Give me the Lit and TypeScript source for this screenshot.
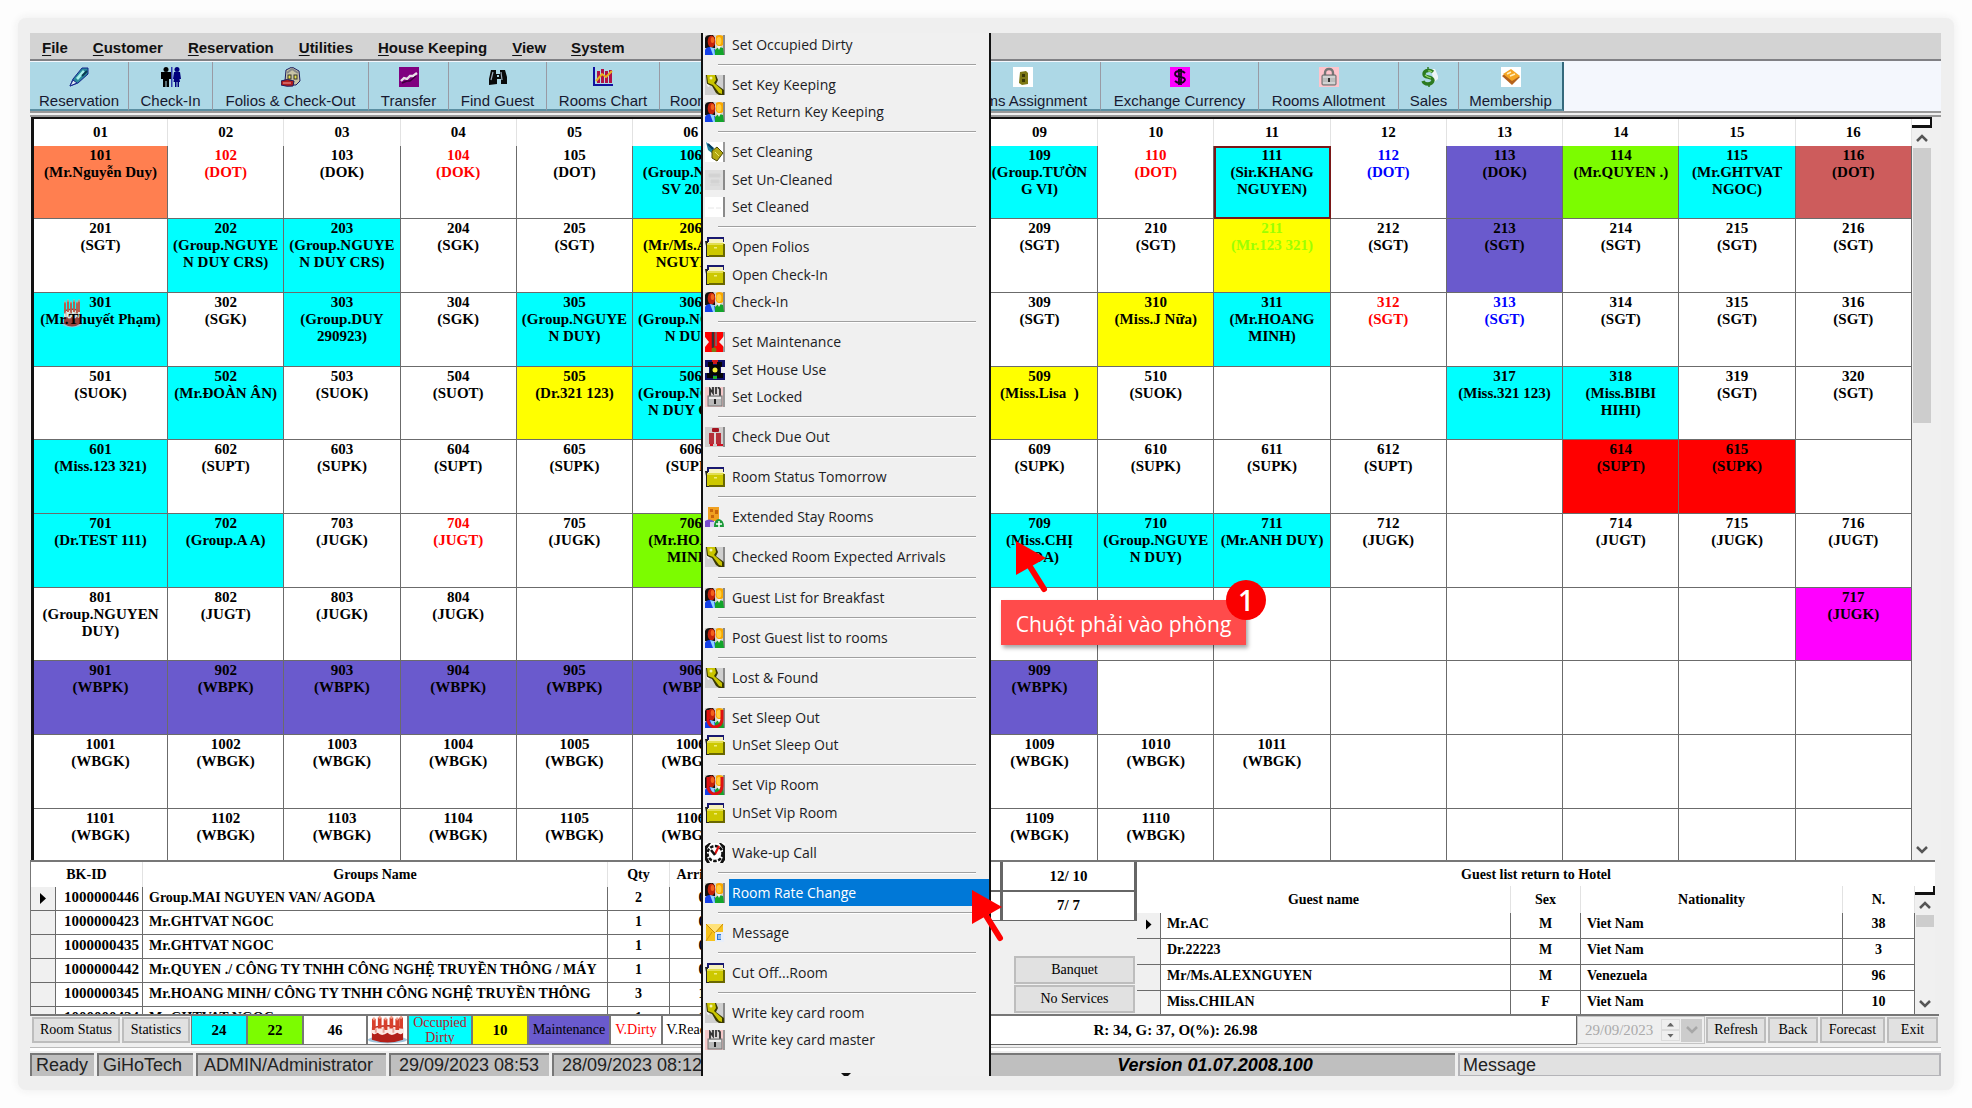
import { LitElement, html, css, svg, nothing } from "lit";
import { customElement, property } from "lit/decorators.js";
import { classMap } from "lit/directives/class-map.js";

/* ---------- icons ---------- */

const box = (body: unknown, cls = "ico") =>
  html`<svg class=${cls} viewBox="0 0 20 20" preserveAspectRatio="none" aria-hidden="true">${body}</svg>`;

const peopleBody = svg`
  <rect width="20" height="20" fill="#d8d4cc"/>
  <rect x="18" width="2" height="20" fill="#8a8a8a"/>
  <path d="M0 3Q1 0 5 0H8L10 3V13H0Z" fill="#141010"/>
  <ellipse cx="6.500" cy="6.500" rx="3.800" ry="6" fill="#c4220a"/>
  <ellipse cx="7.500" cy="5" rx="1.800" ry="3" fill="#f2641c"/>
  <path d="M0 20V15Q1 12 5 12L10 14V20Z" fill="#1440e8"/>
  <path d="M5 12L8 20H10L9 13Z" fill="#8fd4ff"/>
  <path d="M11 1Q14 -1 18 1V10Q14 13 11 9Z" fill="#f9a800"/>
  <ellipse cx="14" cy="6" rx="2.400" ry="4" fill="#ffcf3c"/>
  <path d="M10 20V15Q13 11 18 13L19 20Z" fill="#12a52a"/>
  <path d="M12 11H16L14 15Z" fill="#f4f4f4"/>`;

const keyBody = svg`
  <rect width="20" height="20" fill="#cfcfcf"/>
  <rect x="18" width="2" height="20" fill="#8a8a8a"/>
  <path d="M1 0H11L13 5L11 9L19 15V20H14L11 18L7 11L2 9Z" fill="#3b3a00"/>
  <path d="M2 0H10L11 5L9 8L17 15V19L14 18L8 10L3 8Z" fill="#c9c400"/>
  <circle cx="6" cy="3" r="1.500" fill="#f4f4b0"/>
  <path d="M1 8L5 11L3 12Z" fill="#f6f6f6"/>`;

const folderBody = svg`
  <path d="M2 0H19V5H2Z" fill="#191970"/>
  <path d="M4 2H18V6H4Z" fill="#f7f2c0"/>
  <path d="M0 4H3V19H20V20H1L1 9Z" fill="#222"/>
  <path d="M2 6H19V19H2Z" fill="#cdc800"/>
  <path d="M2 6H19V8H2Z" fill="#e2de50"/>
  <path d="M18 7H20V20H4V18H18Z" fill="#6a6800"/>
  <rect x="9" y="10" width="3" height="1.500" fill="#f0ed7a"/>`;

const lockBody = svg`
  <rect width="20" height="20" fill="#f5c9c9"/>
  <rect x="18" width="2" height="20" fill="#9a9a9a"/>
  <path d="M4 0H15V9H4Z" fill="#d9d5d5"/>
  <path d="M5 9V2L8 6V0M11 0V7M15 9V2L13 0" fill="none" stroke="#333" stroke-width="1.800"/>
  <rect x="3" y="9" width="14" height="10" fill="#b9b9b9" stroke="#777"/>
  <rect x="4" y="10" width="12" height="2" fill="#ececec"/>
  <path d="M9 12H11V17H9Z" fill="#222"/>`;

const vipBody = svg`${peopleBody}
  <path d="M3 2V13Q5 19 10 19Q17 18 17 11V2" fill="none" stroke="#e01010" stroke-width="3"/>`;

const cakeBody = svg`
  <ellipse cx="10" cy="17" rx="10" ry="2.600" fill="#9fc4dc"/>
  <path d="M2 8Q10 5 18 8V17Q10 21 2 17Z" fill="#b3201a"/>
  <path d="M2 9Q10 6 18 9V12Q17 14 15 12Q12 15 10 12Q7 15 5 12Q3 14 2 12Z" fill="#fbe9e4"/>
  <path d="M3 2V10M6 1V9M9 2V10M12 1V9M15 2V10M17 1V9" stroke="#d8402c" stroke-width="1.900"/>
  <path d="M3 1V3M6 0V2M9 1V3M12 0V2M15 1V3M17 0V2" stroke="#f3a08a"/>
  <path d="M4 9V12M8 9V12M13 9V12" stroke="#e8a49a"/>`;

const ICONS: Record<string, unknown> = {
  people: peopleBody,
  key: keyBody,
  folder: folderBody,
  lock: lockBody,
  vip: vipBody,
  cake: cakeBody,
  broom: svg`<rect width="20" height="20" fill="#fff"/><rect x="18" width="2" height="20" fill="#999"/>
    <path d="M1 0L9 6L7 11L3 8Z" fill="#1d7f9c"/><path d="M3 2L8 7" stroke="#073a5c" stroke-width="2"/>
    <path d="M7 9L12 5L18 11L12 19L7 16Z" fill="#b3a911" stroke="#4c4a08"/><path d="M10 10L14 14" stroke="#ece66b"/>`,
  uncleaned: svg`<rect width="20" height="20" fill="#dedede"/><rect x="18" width="2" height="20" fill="#8a8a8a"/>
    <path d="M4 4H15V7H4ZM6 10H14V13H6ZM5 15H15" fill="#d2d2d2" stroke="#d4d4d4"/>`,
  cleaned: svg`<rect width="20" height="20" fill="#fff"/><rect x="18" width="2" height="20" fill="#8a8a8a"/>
    <path d="M3 11H9M11 11H16" stroke="#e6e6e6"/>`,
  tools: svg`<rect width="20" height="20" fill="#f00"/><rect x="18" width="2" height="20" fill="#999"/>
    <path d="M0 5L4 10L0 15ZM19 4L14 10L19 15Z" fill="#efefef"/><path d="M8 0V16" stroke="#333" stroke-width="2.500"/>
    <path d="M11 0V14" stroke="#8a5a5a" stroke-width="2"/><circle cx="9" cy="18" r="2.500" fill="#7a7a10"/>`,
  house: svg`<rect width="20" height="20" fill="#10106a"/><rect x="7" y="0" width="6" height="4" fill="#d01818"/>
    <path d="M3 2H8V5H12V2H17V7H15V13H18V18H12V15H8V18H2V13H5V7H3Z" fill="#050505"/>
    <path d="M5 6H15V14H5Z" fill="#050505"/>
    <path d="M0 7H4V13H0ZM16 7H20V13H16Z" fill="#efefef"/><circle cx="10" cy="10" r="2.500" fill="#f3f03a"/>
    <rect x="8" y="16" width="4" height="3" fill="#1cae2a"/>`,
  dueout: svg`<rect width="20" height="20" fill="#d0cccc"/><rect x="18" width="2" height="20" fill="#8a8a8a"/>
    <rect x="7" y="1" width="7" height="4" rx="1" fill="#a31420"/><path d="M4 6H9V17H4ZM11 6H16V17H11Z" fill="#b5303a"/>
    <path d="M5 18H8M12 18H18" stroke="#d01020" stroke-width="2"/><path d="M10 6V17" stroke="#f3dede"/>`,
  extend: svg`<rect x="3" y="0" width="11" height="14" fill="#f0a020"/><path d="M5 2H8V5H5ZM10 3H13V7H10ZM6 8H9V11H6Z" fill="#c8660a"/>
    <path d="M0 20V14Q4 11 9 14V20Z" fill="#7a4ed0"/><path d="M5 15H12V20H5Z" fill="#d8c8f4"/>
    <path d="M9 20Q9 12 14 12Q19 13 19 20Z" fill="#1c9a3a"/><path d="M14 14V20M11 17H17" stroke="#fff" stroke-width="1.500"/>`,
  clock: svg`<rect width="20" height="20" fill="#fff"/><path d="M0 3L4 0H6L2 6V14L5 20H2L0 17ZM20 3L16 0H14L18 6V14L15 20H18L20 17Z" fill="#111"/>
    <circle cx="10" cy="10.500" r="7.500" fill="#fff" stroke="#111" stroke-width="2.500" stroke-dasharray="3.500 1.500"/>
    <path d="M10 11L14 3" stroke="#e01010" stroke-width="2.200"/><path d="M10 12L6 7" stroke="#111" stroke-width="2.500"/>`,
  mail: svg`<rect x="1" y="1" width="17" height="17" fill="#f6c21c"/><path d="M1 1L10 10L18 1" fill="#ffe27a" stroke="#c88a08"/>
    <path d="M1 18L7 9M12 9L18 18" stroke="#d89a10"/><rect x="10" y="9" width="9" height="10" rx="1" fill="#e6eefb"/>
    <path d="M12 11H16V17H12Z" fill="#2a78d8"/><path d="M13 13H16M13 15H16" stroke="#fff"/>`,
  pen: svg`<path d="M1 19L4 12L13 1H19V7L9 16Z" fill="#2b8a9c" stroke="#14248c"/><path d="M7 11L14 3L16 5L9 13Z" fill="#a7f0ea"/>
    <path d="M1 19L4 13L8 16Z" fill="#dfe8f2" stroke="#14248c"/><path d="M13 9L18 4" stroke="#0a3a52" stroke-width="2"/>`,
  persons: svg`<circle cx="5" cy="2.500" r="2.500" fill="#000"/><path d="M0 5H10V12H8V20H5.500V14H4.500V20H2V12H0Z" fill="#000"/>
    <path d="M10.800 0V20" stroke="#1014a0" stroke-width="1.200"/><circle cx="16" cy="2.500" r="2.500" fill="#00007c"/>
    <path d="M13 5H19L20 12H18.500L19 15H18V20H16.500V15H15.500V20H14V15H12.500L13 12H12Z" fill="#00007c"/>`,
  folio: svg`<path d="M5 3L11 0L18 4L19 14L15 18H8L4 14Z" fill="#c9c4a6" stroke="#1c1c60"/><path d="M6 6L11 2L17 6" fill="none" stroke="#888" stroke-width="2"/>
    <rect x="7" y="8" width="3" height="4" fill="#e8e04a" stroke="#333"/><rect x="13" y="8" width="3" height="4" fill="#e8e04a" stroke="#333"/>
    <path d="M0 14Q6 11 13 14L12 19Q6 20 0 18Z" fill="#b01c1c" stroke="#1c1c60"/><path d="M2 16H10" stroke="#f0a0a0"/>`,
  transfer: svg`<rect width="20" height="20" fill="#800080"/><path d="M2 14L5 11L8 12L11 9L14 9L18 6" fill="none" stroke="#e8e0e8" stroke-width="2.400"/>
    <path d="M3 16L8 14L11 14L17 9" fill="none" stroke="#3c003c" stroke-width="1.400"/>`,
  find: svg`<path d="M3 3H8V7H12V3H17L19 10V17H13V12H9V17L1 18V12Z" fill="#0a0a0a"/><path d="M5 5L3 13M13 5L14 13" stroke="#9ab" stroke-width="1.200"/>
    <path d="M9 8H11V10H9Z" fill="#add8e6"/>`,
  chart: svg`<path d="M1 0V18H20" fill="none" stroke="#1010a0" stroke-width="2"/><path d="M4 4H7V16H4ZM8 2H11V16H8ZM12 4H15V16H12ZM16 3H19V16H16Z" fill="#b01048"/>
    <path d="M3 14L9 7L13 10L19 4" fill="none" stroke="#e8b020" stroke-width="2"/>`,
  phone: svg`<rect width="20" height="20" fill="#fff"/><path d="M7 5L13 4L15 6V17L9 18L6 16Z" fill="#7d7814"/><path d="M9 7H12V10H9ZM9 12H12V15H9Z" fill="#3a3804"/>`,
  dollar: svg`<rect width="20" height="20" fill="#f0f"/><path d="M15 6Q13 4 10 4Q5 4 5 7Q5 9.500 10 10Q15 10.500 15 13Q14 16 10 16Q7 16 5 14M9 2V18M11 2V18" fill="none" stroke="#1a0020" stroke-width="1.800"/>`,
  padlock: svg`<rect width="20" height="20" fill="#ffc4cc"/><path d="M6 9V6Q6 2 10 2Q14 2 14 6V9" fill="none" stroke="#777" stroke-width="2.400"/>
    <rect x="3" y="8" width="14" height="10" rx="1" fill="#bdbdbd" stroke="#666"/><path d="M4 10H16M4 16H16" stroke="#e8e8e8"/><path d="M10 11V15" stroke="#333" stroke-width="2"/>`,
  sales: svg`<path d="M12 2H16L19 9V12L15 15Z" fill="#eef4f6"/><path d="M14 5Q12 3 9 3.500Q5 4 5 7Q5 9.500 9 10Q14 11 14 13.500Q13 17 9 17Q5 17 4 14" fill="none" stroke="#2c7a20" stroke-width="3.400"/>
    <path d="M13 5Q11 3.500 9 4M6 8Q8 10 12 11" fill="none" stroke="#9ada6a" stroke-width="1.200"/><path d="M9 0V3M10 17V20" stroke="#2c7a20" stroke-width="1.500"/>`,
  member: svg`<rect width="20" height="20" fill="#fff"/><path d="M1 9L9 3L19 10L11 18Z" fill="#b4621c"/><path d="M2 7L10 2L19 9L11 14Z" fill="#f5a623"/>
    <path d="M6 7L10 5M9 9L14 7" stroke="#fff0c0" stroke-width="1.500"/>`,
};

const icon = (name: string, cls?: string) => box(ICONS[name], cls);

const chevron = (up: boolean) => html`<svg class="chev" viewBox="0 0 12 8" aria-hidden="true">
  ${svg`<path d=${up ? "M1 7L6 2L11 7" : "M1 1L6 6L11 1"} fill="none" stroke="#555" stroke-width="2.500"/>`}
</svg>`;

/* ---------- data ---------- */

type Tone = "w" | "c" | "y" | "g" | "s" | "o" | "i" | "r" | "m";
interface Room {
  no: string;
  lines: string[];
  tone: Tone;
  ink?: "red" | "blue" | "lime";
  cake?: boolean;
  selected?: boolean;
}

const R = (no: string, text: string, tone: Tone = "w", extra: Partial<Room> = {}): Room => ({
  no,
  lines: text.split("|"),
  tone,
  ...extra,
});
const E = null;

const ROWS: (Room | null)[][] = [
  [
    R("101", "(Mr.Nguyễn Duy)", "o"), R("102", "(DOT)", "w", { ink: "red" }), R("103", "(DOK)"),
    R("104", "(DOK)", "w", { ink: "red" }), R("105", "(DOT)"), R("106", "(Group.NGOC|SV 2023)", "c"), E, E,
    R("109", "(Group.TƯỜN|G VI)", "c"), R("110", "(DOT)", "w", { ink: "red" }),
    R("111", "(Sir.KHANG|NGUYEN)", "c", { selected: true }), R("112", "(DOT)", "w", { ink: "blue" }),
    R("113", "(DOK)", "s"), R("114", "(Mr.QUYEN .)", "g"), R("115", "(Mr.GHTVAT|NGOC)", "c"), R("116", "(DOT)", "i"),
  ],
  [
    R("201", "(SGT)"), R("202", "(Group.NGUYE|N DUY CRS)", "c"), R("203", "(Group.NGUYE|N DUY CRS)", "c"),
    R("204", "(SGK)"), R("205", "(SGT)"), R("206", "(Mr/Ms.ALEX|NGUYEN)", "y"), E, E,
    R("209", "(SGT)"), R("210", "(SGT)"), R("211", "(Mr.123 321)", "y", { ink: "lime" }), R("212", "(SGT)"),
    R("213", "(SGT)", "s"), R("214", "(SGT)"), R("215", "(SGT)"), R("216", "(SGT)"),
  ],
  [
    R("301", "(Mr.Thuyết Phạm)", "c", { cake: true }), R("302", "(SGK)"), R("303", "(Group.DUY|290923)", "c"),
    R("304", "(SGK)"), R("305", "(Group.NGUYE|N DUY)", "c"), R("306", "(Group.NGUYE|N DUY)", "c"), E, E,
    R("309", "(SGT)"), R("310", "(Miss.J Nữa)", "y"), R("311", "(Mr.HOANG|MINH)", "c"),
    R("312", "(SGT)", "w", { ink: "red" }), R("313", "(SGT)", "w", { ink: "blue" }), R("314", "(SGT)"),
    R("315", "(SGT)"), R("316", "(SGT)"),
  ],
  [
    R("501", "(SUOK)"), R("502", "(Mr.ĐOÀN ÂN)", "c"), R("503", "(SUOK)"), R("504", "(SUOT)"),
    R("505", "(Dr.321 123)", "y"), R("506", "(Group.NGUYE|N DUY CRS)", "c"), E, E,
    R("509", "(Miss.Lisa  )", "y"), R("510", "(SUOK)"), E, E,
    R("317", "(Miss.321 123)", "c"), R("318", "(Miss.BIBI|HIHI)", "c"), R("319", "(SGT)"), R("320", "(SGT)"),
  ],
  [
    R("601", "(Miss.123 321)", "c"), R("602", "(SUPT)"), R("603", "(SUPK)"), R("604", "(SUPT)"),
    R("605", "(SUPK)"), R("606", "(SUPK)"), E, E,
    R("609", "(SUPK)"), R("610", "(SUPK)"), R("611", "(SUPK)"), R("612", "(SUPT)"), E,
    R("614", "(SUPT)", "r"), R("615", "(SUPK)", "r"), E,
  ],
  [
    R("701", "(Dr.TEST 111)", "c"), R("702", "(Group.A A)", "c"), R("703", "(JUGK)"),
    R("704", "(JUGT)", "w", { ink: "red" }), R("705", "(JUGK)"), R("706", "(Mr.HOANG|MINH)", "g"), E, E,
    R("709", "(Miss.CHỊ|HOA)", "c"), R("710", "(Group.NGUYE|N DUY)", "c"), R("711", "(Mr.ANH DUY)", "c"),
    R("712", "(JUGK)"), E, R("714", "(JUGT)"), R("715", "(JUGK)"), R("716", "(JUGT)"),
  ],
  [
    R("801", "(Group.NGUYEN|DUY)"), R("802", "(JUGT)"), R("803", "(JUGK)"), R("804", "(JUGK)"),
    E, E, E, E, E, E, E, E, E, E, E, R("717", "(JUGK)", "m"),
  ],
  [
    ...["901", "902", "903", "904", "905", "906"].map((n) => R(n, "(WBPK)", "s")), E, E,
    R("909", "(WBPK)", "s"), E, E, E, E, E, E, E,
  ],
  [
    ...["1001", "1002", "1003", "1004", "1005", "1006"].map((n) => R(n, "(WBGK)")), E, E,
    ...["1009", "1010", "1011"].map((n) => R(n, "(WBGK)")), E, E, E, E, E,
  ],
  [
    ...["1101", "1102", "1103", "1104", "1105", "1106"].map((n) => R(n, "(WBGK)")), E, E,
    ...["1109", "1110"].map((n) => R(n, "(WBGK)")), E, E, E, E, E, E,
  ],
];

const COLS = Array.from({ length: 16 }, (_, i) => String(i + 1).padStart(2, "0"));

const MENUS = ["File", "Customer", "Reservation", "Utilities", "House Keeping", "View", "System"];

const TOOLS: { label: string; icon?: string; width: number }[] = [
  { label: "Reservation", icon: "pen", width: 99 },
  { label: "Check-In", icon: "persons", width: 84 },
  { label: "Folios & Check-Out", icon: "folio", width: 156 },
  { label: "Transfer", icon: "transfer", width: 80 },
  { label: "Find Guest", icon: "find", width: 98 },
  { label: "Rooms Chart", icon: "chart", width: 113 },
  { label: "Rooms", width: 68 },
  { label: "", width: 217 },
  { label: "Rooms Assignment", icon: "phone", width: 156 },
  { label: "Exchange Currency", icon: "dollar", width: 158 },
  { label: "Rooms Allotment", icon: "padlock", width: 140 },
  { label: "Sales", icon: "sales", width: 60 },
  { label: "Membership", icon: "member", width: 105 },
];

const ACTIONS: [string, string][][] = [
  [["people", "Set Occupied Dirty"]],
  [["key", "Set Key Keeping"], ["people", "Set Return Key Keeping"]],
  [["broom", "Set Cleaning"], ["uncleaned", "Set Un-Cleaned"], ["cleaned", "Set Cleaned"]],
  [["folder", "Open Folios"], ["folder", "Open Check-In"], ["people", "Check-In"]],
  [["tools", "Set Maintenance"], ["house", "Set House Use"], ["lock", "Set Locked"]],
  [["dueout", "Check Due Out"]],
  [["folder", "Room Status Tomorrow"]],
  [["extend", "Extended Stay Rooms"]],
  [["key", "Checked Room Expected Arrivals"]],
  [["people", "Guest List for Breakfast"]],
  [["people", "Post Guest list to rooms"]],
  [["key", "Lost & Found"]],
  [["vip", "Set Sleep Out"], ["folder", "UnSet Sleep Out"]],
  [["vip", "Set Vip Room"], ["folder", "UnSet Vip Room"]],
  [["clock", "Wake-up Call"]],
  [["people", "Room Rate Change"]],
  [["mail", "Message"]],
  [["folder", "Cut Off...Room"]],
  [["key", "Write key card room"], ["lock", "Write key card master"]],
];

const GROUPS = [
  ["1000000446", "Group.MAI NGUYEN VAN/ AGODA", "2", "01/10"],
  ["1000000423", "Mr.GHTVAT NGOC", "1", "01/10"],
  ["1000000435", "Mr.GHTVAT NGOC", "1", "01/10"],
  ["1000000442", "Mr.QUYEN ./ CÔNG TY TNHH CÔNG NGHỆ TRUYỀN THÔNG / MÁY", "1", "01/10"],
  ["1000000345", "Mr.HOANG MINH/ CÔNG TY TNHH CÔNG NGHỆ TRUYỀN THÔNG", "3", "13/10"],
  ["1000000424", "Mr.GHTVAT NGOC", "1", "13/10"],
];

const GUESTS = [
  ["Mr.AC", "M", "Viet Nam", "38"],
  ["Dr.22223", "M", "Viet Nam", "3"],
  ["Mr/Ms.ALEXNGUYEN", "M", "Venezuela", "96"],
  ["Miss.CHILAN", "F", "Viet Nam", "10"],
];

const shared = css`
  * { box-sizing: border-box; }
  button { font: inherit; color: inherit; margin: 0; padding: 0; border: 0; background: none; border-radius: 0; }
  table { border-collapse: separate; border-spacing: 0; table-layout: fixed; width: 100%; }
  th, td { padding: 0; font-weight: bold; }
  .chev { width: 12px; height: 8px; display: block; }
  .rail { flex: none; width: 20px; display: flex; flex-direction: column; align-items: center; background: #f0f0f0; }
  .notch { align-self: stretch; height: 9px; background: #fff; border-right: 2px solid #111; border-bottom: 3px solid #111; }
  .rail .arrow { height: 20px; display: flex; align-items: center; }
  .grow { flex: 1; }
`;

/* ---------- room map ---------- */

@customElement("room-map")
class RoomMap extends LitElement {
  static styles = [
    shared,
    css`
      :host { display: flex; min-height: 0; overflow: hidden; background: #f0f0f0; padding: 0 9px 0 1px; }
      .sheet { flex: 1; min-width: 0; border-left: 3px solid #111; background: #fff; border-top: 2px solid #111; }
      .side { border-top: 2px solid #111; }
      .first { width: 134px; }
      th { height: 27px; font: bold 15px/27px "Liberation Serif", serif; border-right: 1px solid #e2e2e2; }
      td { height: 74px; vertical-align: top; text-align: center; font: bold 15px/17px "Liberation Serif", serif;
        border-right: 1px solid #6b6b6b; border-bottom: 1px solid #6b6b6b; white-space: pre; position: relative; color: #000; padding-top: 1px; }
      tr:nth-child(3n + 1) td { height: 73px; }
      .c { background: #0ff; } .y { background: #ff0; } .g { background: #7cfc00; } .s { background: #6a5acd; }
      .o { background: #ff7f50; } .i { background: #cd5c5c; } .r { background: #f00; } .m { background: #f0f; }
      .red { color: #f00; } .blue { color: #00f; } .lime { color: #9cff00; }
      .selected { outline: 2px solid #7a1818; outline-offset: -2px; }
      .line { display: block; position: relative; }
      .cake { position: absolute; left: 28px; top: 6px; width: 20px; height: 29px; opacity: 0.85; }
      .thumb { width: 18px; height: 275px; background: #cdcdcd; }
    `,
  ];

  private cell(room: Room | null) {
    if (!room) return html`<td></td>`;
    const cls = { [room.tone]: true, [room.ink ?? "ink"]: true, selected: !!room.selected };
    return html`<td class=${classMap(cls)}>${room.cake ? icon("cake", "cake") : nothing}<span class="line">${room.no}</span>${room.lines.map((l) => html`<span class="line">${l}</span>`)}</td>`;
  }

  render() {
    return html`
      <div class="sheet">
        <table>
          <thead><tr>${COLS.map((c, i) => html`<th scope="col" class=${i ? "" : "first"}>${c}</th>`)}</tr></thead>
          <tbody>${ROWS.map((r) => html`<tr>${r.map((c) => this.cell(c))}</tr>`)}</tbody>
        </table>
      </div>
      <div class="rail side">
        <span class="notch"></span>
        <span class="arrow">${chevron(true)}</span>
        <span class="thumb"></span>
        <span class="grow"></span>
        <span class="arrow">${chevron(false)}</span>
      </div>`;
  }
}

/* ---------- context menu ---------- */

@customElement("room-menu")
class RoomMenu extends LitElement {
  @property() active = "Room Rate Change";

  static styles = [
    shared,
    css`
      :host { display: flex; flex-direction: column; overflow: hidden; background: #f0f0f0;
        border-left: 2px solid #111; border-right: 2px solid #111; font: 14px/20px "Open Sans", sans-serif; color: #1c1c24; }
      .items { flex: 1; display: flex; flex-direction: column; margin-top: -2px; }
      .item { flex: 11 1 0; min-height: 0; display: flex; align-items: center; gap: 4px; padding-left: 2px; text-align: left; }
      .item .text { flex: 1; align-self: stretch; display: flex; align-items: center; padding-left: 3px; white-space: nowrap; }
      .active .text { background: #0078d7; color: #fff; }
      .ico { width: 20px; height: 20px; flex: none; }
      .sep { flex: 5 1 0; min-height: 0; display: flex; align-items: center; padding: 0 13px 0 15px; }
      .rule { flex: 1; height: 2px; background: #fff; border-top: 1px solid #a0a0a0; }
      .more { height: 22px; display: flex; align-items: flex-end; justify-content: center; }
      .down { width: 10px; height: 3px; background: #111; clip-path: polygon(0 0, 100% 0, 70% 100%, 30% 100%); }
    `,
  ];

  render() {
    return html`
      <div class="items" role="menu">
        ${ACTIONS.map(
          (group, i) => html`${i ? html`<div class="sep" role="separator"><span class="rule"></span></div>` : nothing}
          ${group.map(
            ([ic, text]) => html`<button role="menuitem" class=${classMap({ item: true, active: text === this.active })}>
              ${icon(ic)}<span class="text">${text}</span></button>`
          )}`
        )}
      </div>
      <div class="more"><span class="down"></span></div>`;
  }
}

/* ---------- lower panes ---------- */

@customElement("lower-panes")
class LowerPanes extends LitElement {
  static styles = [
    shared,
    css`
      :host { display: grid; grid-template-columns: minmax(0, 832fr) 275px minmax(0, 798fr); height: 154px; overflow: hidden;
        border-top: 2px solid #777; margin-right: 6px; font: bold 14px/20px "Liberation Serif", serif; color: #000; }
      .pane { overflow: hidden; background: #fff; }
      th { border-right: 1px solid #e2e2e2; }
      td { border-right: 1px solid #6b6b6b; border-bottom: 1px solid #6b6b6b; vertical-align: top; white-space: nowrap; overflow: hidden; }
      .mid { text-align: center; }
      .mark { background: #f0f0f0; text-align: center; }
      .ptr { display: inline-block; width: 6px; height: 11px; background: #000; clip-path: polygon(0 0, 100% 50%, 0 100%); margin-top: 6px; }
      .groups { border-left: 1px solid #777; }
      .groups th { height: 25px; line-height: 25px; }
      .groups td { height: 24px; line-height: 21px; padding-left: 6px; }
      .groups .id { font-size: 15px; padding-left: 8px; }
      .groups .mid, .groups .mark { padding-left: 0; }
      .w-mark { width: 25px; } .w-id { width: 87px; } .w-name { width: 465px; } .w-qty { width: 62px; } .w-arr { width: 90px; }
      .stats { background: #f0f0f0; display: flex; flex-direction: column; }
      .stats td { height: 29px; line-height: 28px; font-size: 15px; text-align: center; background: #fff; border-right: 3px solid #666; border-bottom: 2px solid #666; }
      .stats tr:last-child td { border-bottom-width: 1px; line-height: 26px; }
      .stats .val { width: 134px; }
      .svc { margin: auto 2px 1px auto; display: grid; gap: 1px; width: 121px; }
      .svc button { height: 28px; background: #e1e1e1; border: 2px solid #bdbdbd; font-weight: normal; }
      .guests { display: flex; flex-direction: column; }
      .title { height: 24px; line-height: 26px; text-align: center; }
      .body { flex: 1; min-height: 0; display: flex; }
      .list { flex: 1; min-width: 0; overflow: hidden; }
      .guests th { height: 26px; line-height: 27px; }
      .guests td { height: 26px; line-height: 21px; padding-left: 6px; }
      .guests .mid, .guests .mark { padding-left: 0; }
      .g-mark { width: 24px; } .g-sex { width: 70px; } .g-nat { width: 262px; } .g-n { width: 72px; }
      .thumb { width: 18px; height: 12px; background: #cdcdcd; }
    `,
  ];

  render() {
    return html`
      <div class="pane groups">
        <table>
          <colgroup><col class="w-mark" /><col class="w-id" /><col class="w-name" /><col class="w-qty" /><col class="w-arr" /><col /></colgroup>
          <thead><tr><th colspan="2">BK-ID</th><th>Groups Name</th><th>Qty</th><th>Arrival Date</th><th></th></tr></thead>
          <tbody>
            ${GROUPS.map(
              ([id, name, qty, arr], i) => html`<tr><td class="mark">${i ? nothing : html`<span class="ptr"></span>`}</td>
                <td class="id">${id}</td><td>${name}</td><td class="mid">${qty}</td><td class="mid">${arr}</td><td></td></tr>`
            )}
          </tbody>
        </table>
      </div>
      <div class="stats">
        <table><tbody>
          <tr><td></td><td class="val">12/ 10</td></tr>
          <tr><td></td><td class="val">7/ 7</td></tr>
        </tbody></table>
        <div class="svc"><button>Banquet</button><button>No Services</button></div>
      </div>
      <div class="pane guests">
        <div class="title">Guest list return to Hotel</div>
        <div class="body">
          <div class="list">
            <table>
              <colgroup><col class="g-mark" /><col /><col class="g-sex" /><col class="g-nat" /><col class="g-n" /></colgroup>
              <thead><tr><th colspan="2">Guest name</th><th>Sex</th><th>Nationality</th><th>N.</th></tr></thead>
              <tbody>
                ${GUESTS.map(
                  ([name, sex, nat, n], i) => html`<tr><td class="mark">${i ? nothing : html`<span class="ptr"></span>`}</td>
                    <td>${name}</td><td class="mid">${sex}</td><td>${nat}</td><td class="mid">${n}</td></tr>`
                )}
              </tbody>
            </table>
          </div>
          <div class="rail">
            <span class="notch"></span>
            <span class="arrow">${chevron(true)}</span>
            <span class="thumb"></span>
            <span class="grow"></span>
            <span class="arrow">${chevron(false)}</span>
          </div>
        </div>
      </div>`;
  }
}

/* ---------- application window ---------- */

@customElement("app-root")
class AppRoot extends LitElement {
  static styles = [
    shared,
    css`
      :host { display: block; box-sizing: border-box; height: 100vh; padding: 18px; background: #fdfdfd; overflow: hidden; }
      .card { height: 100%; padding: 15px 13px 14px 12px; background: #efefef; border-radius: 8px; box-shadow: 0 0 8px 1px #efefef; }
      .app { position: relative; height: 100%; display: flex; flex-direction: column; }
      .menubar { flex: none; height: 28px; display: flex; align-items: center; gap: 25px; padding: 3px 0 0 12px; background: #d3d3d3;
        border-bottom: 2px solid #808084; font: bold 15px/20px "Liberation Sans", sans-serif; color: #111; }
      .hot { text-decoration: underline; text-underline-offset: 2px; }
      .tools { flex: none; height: 52px; display: flex; background: #f4f7fd; border-bottom: 2px solid #999; font: 15px/16px "Liberation Sans", sans-serif; color: #181830; padding: 1px 0 0; }
      .tool { flex: none; height: 49px; display: flex; flex-direction: column; align-items: center; justify-content: flex-end; gap: 6px;
        background: #add8e6; border-right: 1px solid #999aa4; border-bottom: 2px solid #5b8fa2; white-space: nowrap; }
      .tool:last-child { border-right: 2px solid #35697c; }
      .tool .ico { width: 20px; height: 20px; }
      .gap { flex: none; height: 4px; background: #f0f0f0; border-bottom: 2px solid #999; }
      .map { flex: 1; }
      .bar { flex: none; display: flex; align-items: stretch; height: 31px; margin-right: 2px; border-top: 2px solid #777; padding-left: 1px;
        font: 14px/18px "Liberation Serif", serif; color: #000; }
      .btn { background: #e1e1e1; border: 2px solid #bdbdbd; margin: 1px 1px 2px; text-align: center; white-space: nowrap; flex: none; }
      .chip { flex: none; display: flex; align-items: center; justify-content: center; text-align: center; border: 1px solid #777; border-top: 0; overflow: hidden; background: #fff; white-space: nowrap; }
      .num { font-weight: bold; font-size: 15px; }
      .cyan { background: #0ff; } .green { background: #7cfc00; } .yellow { background: #ff0; } .slate { background: #6a5acd; }
      .redink { color: #f00; } .two { white-space: normal; line-height: 15px; color: #b8202c; }
      .w52 { width: 52px; } .w56 { width: 56px; } .w64 { width: 64px; } .w68 { width: 68px; } .w82 { width: 82px; } .w88 { width: 88px; }
      .chip .ico { width: 39px; height: 28px; }
      .occ { flex: 1; border: 1px solid #666; border-top: 0; background: #fff; display: flex; align-items: center; justify-content: center; font-weight: bold; font-size: 15px; }
      .date { flex: none; width: 128px; display: flex; align-items: center; border: 1px solid #c4c4c4; margin-bottom: 1px; padding-right: 2px; }
      .date input { flex: 1; min-width: 0; border: 0; background: none; padding: 0 0 0 7px; font: 15px/18px "Liberation Serif", serif; color: #aaa; }
      .spin { width: 19px; height: 22px; display: grid; margin-right: 1px; }
      .spin button { border: 1px solid #dcdcdc; display: flex; align-items: center; justify-content: center; }
      .tri { width: 7px; height: 4px; background: #666; clip-path: polygon(0 100%, 50% 0, 100% 100%); }
      .tri.dn { clip-path: polygon(0 0, 100% 0, 50% 100%); }
      .drop { width: 21px; height: 23px; background: #ccc; display: flex; align-items: center; justify-content: center; }
      .drop .chev { opacity: 0.3; }
      .line { flex: none; height: 8px; display: flex; align-items: center; }
      .line::after { content: ""; flex: 1; height: 3px; border-top: 1px solid #bbb; background: #fff; }
      .status { flex: none; height: 23px; display: flex; gap: 3px; font: 18px/20px "Liberation Sans", sans-serif; color: #222; }
      .panel { flex: none; background: #bfbfbf; border-top: 2px solid #777; border-left: 2px solid #777; padding-left: 4px; white-space: nowrap; overflow: hidden; }
      .s1 { width: 64px; } .s2 { width: 96px; } .s3 { width: 190px; padding-left: 6px; } .s4 { width: 160px; padding-left: 8px; } .s5 { width: 418px; padding-left: 8px; }
      .ver { flex: 1; text-align: center; font-weight: bold; font-style: italic; color: #000; padding: 0; }
      .msg { width: 483px; background: #e1e1e1; border: 2px solid #b4b4b8; border-bottom-width: 1px; padding-left: 3px; }
      .menu { position: absolute; left: 671px; top: 0; bottom: 0; width: 290px; }
      .tip { position: absolute; left: 971px; top: 567px; width: 245px; height: 45px; display: flex; align-items: center; justify-content: center; background: #ff4b4b; color: #fff;
        font: 21px/28px "Open Sans", sans-serif; white-space: nowrap; box-shadow: 2px 3px 4px rgba(0, 0, 0, 0.35); padding-top: 2px; }
      .badge { position: absolute; left: 1196px; top: 547px; width: 40px; height: 40px; border-radius: 50%; background: #fa0000; color: #fff;
        display: flex; align-items: center; justify-content: center; font: 600 28px/40px "Open Sans", sans-serif; }
      .ptr1, .ptr2 { position: absolute; width: 34px; height: 54px; }
      .ptr1 { left: 986px; top: 508px; }
      .ptr2 { left: 942px; top: 857px; }
    `,
  ];

  private arrow(cls: string) {
    return html`<svg class=${cls} viewBox="0 0 34 54" aria-hidden="true">
      <path d="M0 0L30 17L0 34Z" fill="#f00" /><path d="M13 24L28 48" stroke="#f00" stroke-width="6" stroke-linecap="round" />
    </svg>`;
  }

  render() {
    return html`
      <div class="card">
        <div class="app">
          <nav class="menubar">
            ${MENUS.map((m) => html`<button><span class="hot">${m[0]}</span>${m.slice(1)}</button>`)}
          </nav>
          <div class="tools">
            ${TOOLS.map(
              (t) => html`<button class="tool" style="width:${t.width}px">${t.icon ? icon(t.icon) : nothing}<span>${t.label}</span></button>`
            )}
          </div>
          <div class="gap"></div>
          <room-map class="map"></room-map>
          <lower-panes></lower-panes>
          <div class="bar">
            <button class="btn w88">Room Status</button>
            <button class="btn w68">Statistics</button>
            <span class="chip num cyan w56">24</span>
            <span class="chip num green w56">22</span>
            <span class="chip num w64">46</span>
            <span class="chip">${icon("cake")}</span>
            <span class="chip cyan two w64">Occupied Dirty</span>
            <span class="chip num yellow w56">10</span>
            <span class="chip slate w82">Maintenance</span>
            <span class="chip redink w52">V.Dirty</span>
            <span class="chip w56">V.Ready</span>
            <span class="chip w56"></span>
            <output class="occ">R: 34, G: 37, O(%): 26.98</output>
            <span class="date">
              <input type="text" aria-label="Date" value="29/09/2023" disabled />
              <span class="spin">
                <button aria-label="Next day"><span class="tri"></span></button>
                <button aria-label="Previous day"><span class="tri dn"></span></button>
              </span>
              <button class="drop" aria-label="Open calendar">${chevron(false)}</button>
            </span>
            <button class="btn" style="width:60px">Refresh</button>
            <button class="btn" style="width:50px">Back</button>
            <button class="btn" style="width:65px">Forecast</button>
            <button class="btn" style="width:51px">Exit</button>
          </div>
          <div class="line"></div>
          <footer class="status">
            <span class="panel s1">Ready</span>
            <span class="panel s2">GiHoTech</span>
            <span class="panel s3">ADMIN/Administrator</span>
            <span class="panel s4">29/09/2023 08:53</span>
            <span class="panel s5">28/09/2023 08:12</span>
            <span class="panel ver">Version 01.07.2008.100</span>
            <span class="panel msg">Message</span>
          </footer>
          <room-menu class="menu"></room-menu>
          ${this.arrow("ptr1")} ${this.arrow("ptr2")}
          <div class="tip" role="tooltip">Chuột phải vào phòng</div>
          <span class="badge">1</span>
        </div>
      </div>`;
  }
}
